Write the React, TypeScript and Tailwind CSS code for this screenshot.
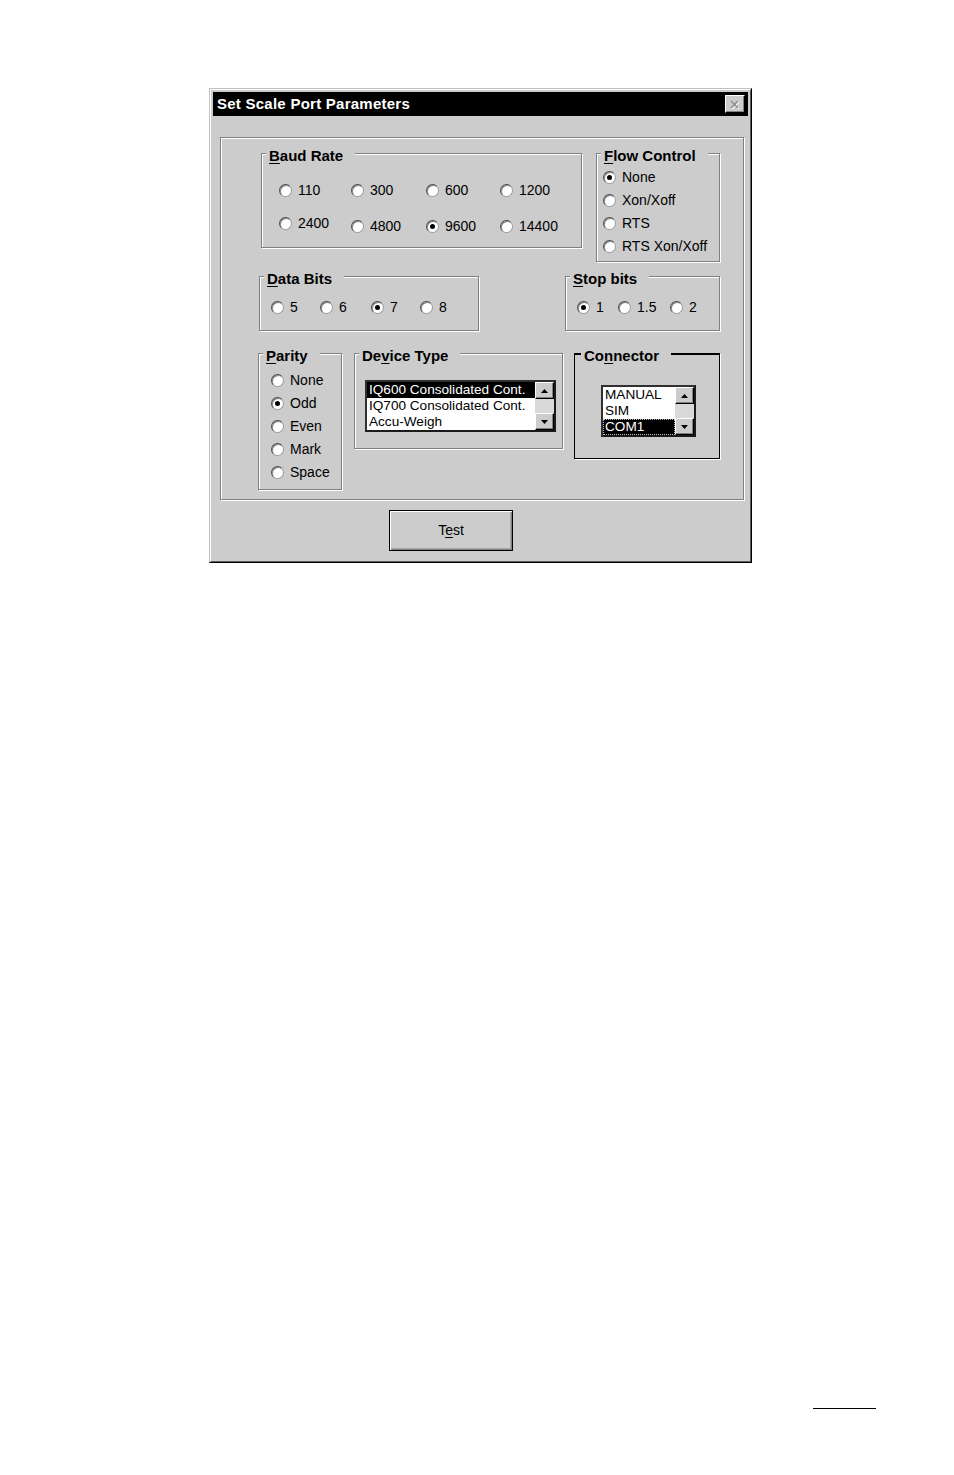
import React from "react";

const Lbl = ({ text, u }: { text: string; u: number }) => (
  <>
    {text.slice(0, u)}
    <span className="underline underline-offset-[2px]">{text[u]}</span>
    {text.slice(u + 1)}
  </>
);

const Radio = ({ label, checked = false, className = "" }: { label: string; checked?: boolean; className?: string }) => (
  <div className={`flex items-center h-[18px] ${className}`}>
    <span className="relative shrink-0 w-[13px] h-[13px] rounded-full bg-white border border-t-[#4a4a4a] border-l-[#4a4a4a] border-r-[#9a9a9a] border-b-[#9a9a9a] shadow-[inset_1px_1px_0_#8a8a8a]">
      {checked && <span className="absolute left-[3px] top-[3px] w-[5px] h-[5px] rounded-full bg-black" />}
    </span>
    <span className="ml-[6px] text-[14px] leading-[18px] whitespace-nowrap">{label}</span>
  </div>
);

const Group = ({
  label,
  u,
  className = "",
  dark = false,
  children,
}: {
  label: string;
  u: number;
  className?: string;
  dark?: boolean;
  children?: React.ReactNode;
}) => (
  <div
    className={`relative shrink-0 ${
      dark
        ? "border border-t-2 border-black shadow-[1px_1px_0_#ffffff]"
        : "border border-[#808080] shadow-[inset_1px_1px_0_#ffffff,1px_1px_0_#ffffff]"
    } ${className}`}
  >
    <span
      className={`absolute ${dark ? "-top-[8px] left-[6px]" : "-top-[7px] left-[4px]"} pl-[3px] pr-[12px] bg-[#cccccc] font-bold text-[15px] leading-[17px] whitespace-nowrap`}
    >
      <Lbl text={label} u={u} />
    </span>
    {children}
  </div>
);

const ScrollBtn = ({ up }: { up: boolean }) => (
  <div className="h-[17px] shrink-0 bg-[#cccccc] border border-t-white border-l-white border-r-black border-b-black shadow-[inset_-1px_-1px_0_#808080] flex items-center justify-center">
    <svg width="7" height="4" viewBox="0 0 7 4">
      <path d={up ? "M3.5 0 L7 4 L0 4 Z" : "M0 0 L7 0 L3.5 4 Z"} fill="black" />
    </svg>
  </div>
);

const ListBox = ({
  items,
  selected,
  dotted = false,
  className = "",
}: {
  items: string[];
  selected: number;
  dotted?: boolean;
  className?: string;
}) => (
  <div className={`flex h-[52px] bg-white border-2 border-t-[#303030] border-l-[#303030] border-r-[#1a1a1a] border-b-[#1a1a1a] ${className}`}>
    <div className="flex-1 min-w-0 flex flex-col">
      {items.map((it, i) => (
        <div
          key={it}
          className={`h-[16px] leading-[16px] px-[2px] text-[13.6px] whitespace-nowrap overflow-hidden ${
            i === selected ? "bg-black text-white" : "text-black"
          } ${i === selected && dotted ? "outline outline-1 outline-dotted outline-[#bbbbbb] -outline-offset-1" : ""}`}
        >
          {it}
        </div>
      ))}
    </div>
    <div className="w-[19px] shrink-0 flex flex-col">
      <ScrollBtn up />
      <div className="flex-1 bg-[#d9d9d9]" />
      <ScrollBtn up={false} />
    </div>
  </div>
);

export default function App() {
  return (
    <div className="min-h-[1475px] bg-white pt-[88px] text-black font-['Liberation_Sans',Arial,sans-serif]">
      {/* Dialog */}
      <div className="ml-[209px] w-[543px] h-[475px] border border-t-[#c0c0c0] border-l-[#c0c0c0] border-r-black border-b-black">
        <div className="h-full border border-t-white border-l-white border-r-[#606060] border-b-[#606060] bg-[#cccccc] p-[2px] flex flex-col">
          {/* Title bar */}
          <div className="h-[24px] shrink-0 bg-black flex items-center justify-between pl-[4px] pr-[3px]">
            <span className="text-white font-bold text-[15px] tracking-[0.25px] leading-[18px]">Set Scale Port Parameters</span>
            <div className="w-[20px] h-[18px] bg-[#cccccc] border border-t-white border-l-white border-r-black border-b-black shadow-[inset_-1px_-1px_0_#808080] flex items-center justify-center">
              <svg width="10" height="9" viewBox="0 0 10 9">
                <path d="M1 1 L8 8 M8 1 L1 8" stroke="#ffffff" strokeWidth="1.6" transform="translate(0.8 0.8)" />
                <path d="M1 1 L8 8 M8 1 L1 8" stroke="#8a8a8a" strokeWidth="1.6" />
              </svg>
            </div>
          </div>

          {/* Inner etched panel */}
          <div className="mt-[21px] ml-[7px] mr-[4px] h-[363px] shrink-0 border border-[#808080] shadow-[inset_1px_1px_0_#ffffff,1px_1px_0_#ffffff] flex flex-col pt-[15px]">
            {/* Row 1 */}
            <div className="flex items-start">
              <Group label="Baud Rate" u={0} className="ml-[40px] w-[321px] h-[95px] pl-[17px] pt-[27px]">
                <div className="flex">
                  <Radio label="110" className="w-[72px]" />
                  <Radio label="300" className="w-[75px]" />
                  <Radio label="600" className="w-[74px]" />
                  <Radio label="1200" />
                </div>
                <div className="flex items-start mt-[15px]">
                  <Radio label="2400" className="w-[72px]" />
                  <Radio label="4800" className="w-[75px] mt-[3px]" />
                  <Radio label="9600" checked className="w-[74px] mt-[3px]" />
                  <Radio label="14400" className="mt-[3px]" />
                </div>
              </Group>
              <Group label="Flow Control" u={0} className="ml-[14px] w-[124px] h-[109px] pl-[6px] pt-[14px]">
                <div className="flex flex-col gap-[5px]">
                  <Radio label="None" checked />
                  <Radio label="Xon/Xoff" />
                  <Radio label="RTS" />
                  <Radio label="RTS Xon/Xoff" />
                </div>
              </Group>
            </div>

            {/* Row 2 */}
            <div className="flex items-start mt-[14px]">
              <Group label="Data Bits" u={0} className="ml-[38px] w-[220px] h-[55px] pl-[11px] pt-[21px]">
                <div className="flex">
                  <Radio label="5" className="w-[49px]" />
                  <Radio label="6" className="w-[51px]" />
                  <Radio label="7" checked className="w-[49px]" />
                  <Radio label="8" />
                </div>
              </Group>
              <Group label="Stop bits" u={0} className="ml-[86px] w-[155px] h-[55px] pl-[11px] pt-[21px]">
                <div className="flex">
                  <Radio label="1" checked className="w-[41px]" />
                  <Radio label="1.5" className="w-[52px]" />
                  <Radio label="2" />
                </div>
              </Group>
            </div>

            {/* Row 3 */}
            <div className="flex items-start mt-[22px]">
              <Group label="Parity" u={0} className="ml-[37px] w-[84px] h-[137px] pl-[12px] pt-[17px]">
                <div className="flex flex-col gap-[5px]">
                  <Radio label="None" />
                  <Radio label="Odd" checked />
                  <Radio label="Even" />
                  <Radio label="Mark" />
                  <Radio label="Space" />
                </div>
              </Group>
              <Group label="Device Type" u={2} className="ml-[12px] w-[209px] h-[96px] pl-[10px] pt-[26px]">
                <ListBox
                  className="w-[191px]"
                  items={["IQ600 Consolidated Cont.", "IQ700 Consolidated Cont.", "Accu-Weigh"]}
                  selected={0}
                />
              </Group>
              <Group label="Connector" u={2} dark className="ml-[11px] w-[146px] h-[106px] pl-[26px] pt-[30px]">
                <ListBox className="w-[95px]" items={["MANUAL", "SIM", "COM1"]} selected={2} dotted />
              </Group>
            </div>
          </div>

          {/* Button */}
          <div className="mt-[10px] ml-[176px] w-[124px] h-[41px] border border-black bg-[#cccccc] shadow-[inset_1px_1px_0_#ffffff,inset_-1px_-1px_0_#808080,inset_-2px_-2px_0_#a8a8a8] flex items-center justify-center text-[14px]">
            <span>
              T<span className="underline underline-offset-[2px]">e</span>st
            </span>
          </div>
        </div>
      </div>

      {/* page footer rule */}
      <div className="mt-[845px] ml-[813px] w-[63px] h-[1px] bg-black" />
    </div>
  );
}
